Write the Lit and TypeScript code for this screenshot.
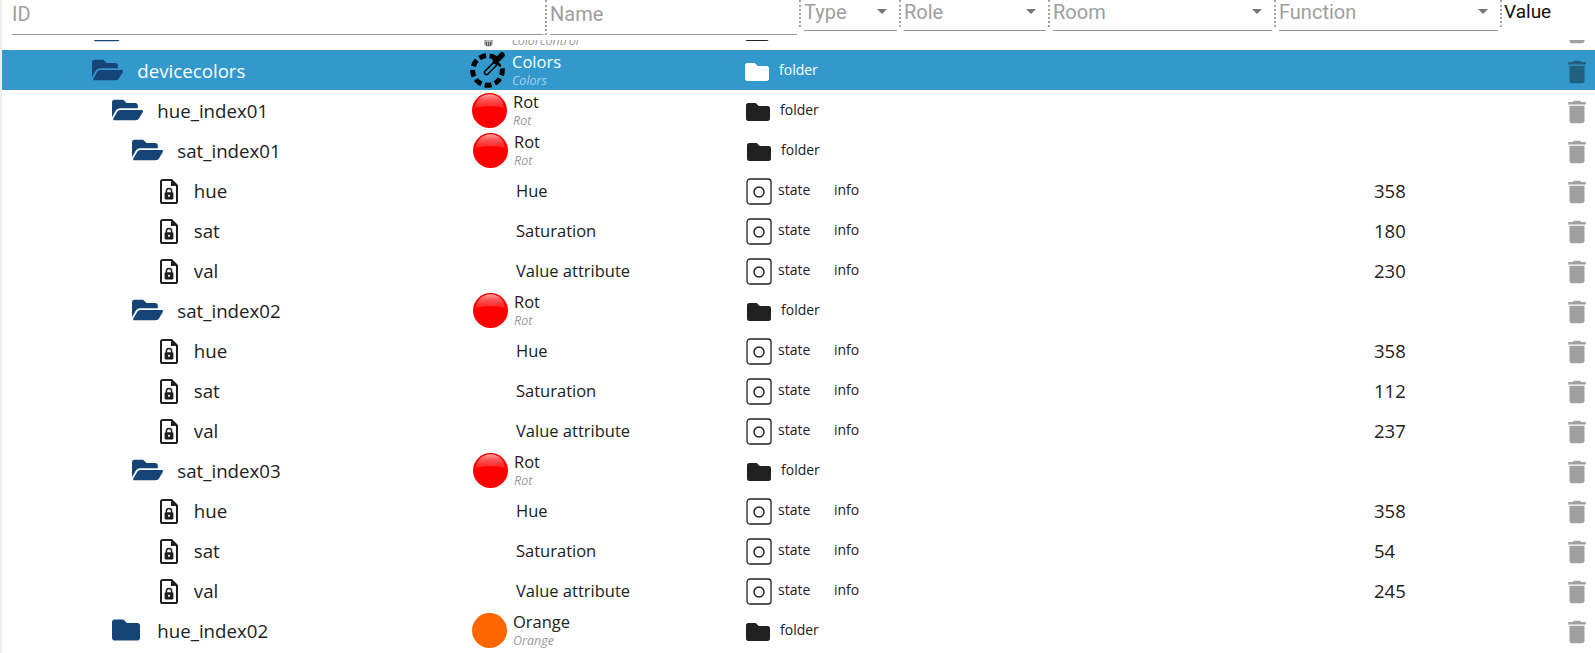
import { LitElement, html, css, nothing } from "lit";
import { customElement } from "lit/decorators.js";

type Row = {
  id: string;
  indent: number;
  icon: "open" | "closed" | "file";
  art?: "colors" | "red" | "orange" | "stub";
  name?: string;
  sub?: string;
  leaf?: boolean;
  value?: string;
  shift: number;
  selected?: boolean;
};

const leaf = (id: string, name: string, value: string): Row => ({
  id,
  indent: 160,
  icon: "file",
  name,
  leaf: true,
  value,
  shift: 1,
});

const sat = (id: string): Row => ({
  id,
  indent: 132,
  icon: "open",
  art: "red",
  name: "Rot",
  sub: "Rot",
  shift: 2,
});

const ROWS: Row[] = [
  { id: "", indent: 93, icon: "open", art: "stub", name: "", sub: "colorcontrol", shift: 0 },
  { id: "devicecolors", indent: 92, icon: "open", art: "colors", name: "Colors", sub: "Colors", shift: 0, selected: true },
  { id: "hue_index01", indent: 112, icon: "open", art: "red", name: "Rot", sub: "Rot", shift: 1 },
  sat("sat_index01"),
  leaf("hue", "Hue", "358"),
  leaf("sat", "Saturation", "180"),
  leaf("val", "Value attribute", "230"),
  sat("sat_index02"),
  leaf("hue", "Hue", "358"),
  leaf("sat", "Saturation", "112"),
  leaf("val", "Value attribute", "237"),
  sat("sat_index03"),
  leaf("hue", "Hue", "358"),
  leaf("sat", "Saturation", "54"),
  leaf("val", "Value attribute", "245"),
  { id: "hue_index02", indent: 112, icon: "closed", art: "orange", name: "Orange", sub: "Orange", shift: 1 },
];

const FIELDS = [
  { label: "Type", width: 93 },
  { label: "Role", width: 142 },
  { label: "Room", width: 219 },
  { label: "Function", width: 219 },
];

const openFolder = html`<svg class="folder-open" viewBox="0 0 576 512">
  <path
    fill="currentColor"
    d="M572.694 292.093L500.27 416.248A63.997 63.997 0 0 1 444.989 448H45.025c-18.523 0-30.064-20.093-20.731-36.093l72.424-124.155A64 64 0 0 1 152 256h399.964c18.523 0 30.064 20.093 20.73 36.093zM152 224h328v-48c0-26.51-21.49-48-48-48H272l-64-64H48C21.49 64 0 85.49 0 112v278.046l69.077-118.418C86.214 242.25 117.989 224 152 224z"
  />
</svg>`;

const folderPath =
  "M464 128H272l-64-64H48C21.49 64 0 85.49 0 112v288c0 26.51 21.49 48 48 48h416c26.51 0 48-21.49 48-48V176c0-26.51-21.49-48-48-48z";

const closedFolder = html`<svg class="folder-closed" viewBox="0 0 512 512">
  <path fill="currentColor" d=${folderPath} />
</svg>`;

const typeFolder = html`<svg class="type-folder" viewBox="0 0 512 512">
  <path fill="currentColor" d=${folderPath} />
</svg>`;

const fileLock = html`<svg class="file-lock" viewBox="0 0 18 25">
  <path
    fill="none"
    stroke="#1c1c1c"
    stroke-width="2"
    stroke-linejoin="round"
    d="M2.6 1H11.5L17 6.5V22.4A1.6 1.6 0 0 1 15.4 24H2.6A1.6 1.6 0 0 1 1 22.4V2.6A1.6 1.6 0 0 1 2.6 1Z"
  />
  <path fill="#1c1c1c" d="M11 1.5V7H16.5Z" />
  <path fill="none" stroke="#1c1c1c" stroke-width="1.5" d="M6.4 13.6V12a2.6 2.6 0 0 1 5.2 0v1.6" />
  <rect x="4.6" y="13.2" width="8.8" height="7.2" rx="0.8" fill="#1c1c1c" />
  <circle cx="9" cy="16.8" r="1.1" fill="#fff" />
</svg>`;

const stateIcon = html`<svg class="state-icon" viewBox="0 0 26 27">
  <rect x="1" y="1" width="24" height="25" rx="3" fill="none" stroke="#222" stroke-width="1.3" />
  <circle cx="13" cy="14" r="5" fill="none" stroke="#222" stroke-width="1.5" />
</svg>`;

const trash = html`<svg class="trash" viewBox="0 0 24 24">
  <path
    fill="currentColor"
    d="M6 19c0 1.1.9 2 2 2h8c1.1 0 2-.9 2-2V7H6v12zM19 4h-3.5l-1-1h-5l-1 1H5v2h14V4z"
  />
</svg>`;

const redBall = html`<svg class="art" viewBox="0 0 35 35">
  <defs>
    <linearGradient id="gloss" x1="0" y1="0" x2="0" y2="1">
      <stop offset="0" stop-color="#ffa6a6" />
      <stop offset="0.35" stop-color="#ff5c5c" />
      <stop offset="1" stop-color="#ff1c1c" />
    </linearGradient>
  </defs>
  <circle cx="17.5" cy="17.5" r="17.5" fill="#f00" />
  <path d="M3 15C4 6 10 1.2 17.5 1.2S31 6 32 15C24 12.8 11 12.8 3 15Z" fill="url(#gloss)" />
</svg>`;

const orangeBall = html`<svg class="art" viewBox="0 0 35 35">
  <circle cx="17.5" cy="17.5" r="17.5" fill="#ff6600" />
</svg>`;

const colorsIcon = html`<svg class="art colors" viewBox="0 0 37 36">
  <circle
    cx="17.5"
    cy="18.5"
    r="14.8"
    fill="none"
    stroke="#000"
    stroke-width="5"
    stroke-dasharray="7 3.5 7 3.5 7 3.5 7 3.5 7 3.5 7 3.5 7 3.5 7 19.5"
    transform="rotate(-8 17.5 18.5)"
  />
  <path d="M16.5 20.5L26 11" stroke="#000" stroke-width="5.5" stroke-linecap="round" />
  <path d="M16.5 20.5L25 12" stroke="#3399cc" stroke-width="2.5" stroke-linecap="round" />
  <path d="M25.5 9.5L32 3" stroke="#000" stroke-width="5.5" stroke-linecap="round" />
  <path d="M23 6.5L30 13.5" stroke="#000" stroke-width="2.5" stroke-linecap="round" />
</svg>`;

const stubIcon = html`<svg class="art stub" viewBox="0 0 35 35">
  <path d="M14 24v7c0 2.5 7 2.5 7 0v-7" fill="#bbb" stroke="#777" />
  <path d="M15.5 29v4M17.5 29v4M19.5 29v4" stroke="#555" />
</svg>`;

@customElement("app-root")
export class AppRoot extends LitElement {
  static styles = css`
    :host {
      display: block;
      height: 653px;
      overflow: hidden;
      background: #fff;
      border-left: 2px solid #ececec;
      color: #212121;
      font-family: "Open Sans", "Noto Sans", sans-serif;
    }
    .head {
      display: flex;
      height: 40px;
      font-family: Roboto, sans-serif;
      color: #9e9e9e;
    }
    .field {
      box-sizing: border-box;
      border-bottom: 1.5px solid #949494;
      display: flex;
      align-items: flex-start;
      justify-content: space-between;
    }
    .text-field {
      height: 35px;
      font-size: 20px;
      line-height: 28px;
    }
    .id-field {
      width: 531px;
      margin-left: 10px;
    }
    .name-field {
      width: 247px;
      margin-left: 3px;
    }
    .select-field {
      height: 31px;
      font-size: 20px;
      line-height: 24px;
      margin-left: 3px;
    }
    .arrow {
      width: 0;
      height: 0;
      border-left: 5px solid transparent;
      border-right: 5px solid transparent;
      border-top: 5px solid #757575;
      margin: 9px 10px 0 0;
    }
    .sep {
      flex: none;
      width: 0;
      height: 27px;
      margin-left: 2px;
      border-left: 2px dotted #a3a3a3;
    }
    .sep.tall {
      height: 35px;
    }
    .value-head {
      margin-left: 2px;
      color: #111;
      font-size: 19px;
      line-height: 24px;
    }
    .rows {
      height: 613px;
      overflow: hidden;
    }
    .row {
      display: grid;
      grid-template-columns: calc(468px + var(--s)) 275px 88px calc(541px - var(--s)) 1fr 30px;
      align-items: center;
      height: 40px;
      padding-right: 3px;
    }
    .row:first-child {
      margin-top: -30px;
    }
    .row:first-child .folder-open {
      margin-top: 1px;
    }
    .row.selected {
      background: #3399cc;
      color: #fff;
    }
    .row.selected .trash {
      color: #22607f;
    }
    .row.selected .type-folder {
      color: #fff;
    }
    .row.selected .sub {
      color: #a5d0e8;
    }
    .id {
      display: flex;
      align-items: center;
      font-size: 18.7px;
      white-space: nowrap;
    }
    .id-text {
      margin-left: 14.3px;
      margin-top: 1px;
    }
    .folder-open {
      width: 31px;
      height: 28px;
      color: #164477;
    }
    .folder-closed {
      width: 28px;
      height: 28px;
      color: #164477;
      margin-right: 3px;
    }
    .file-lock {
      width: 18px;
      height: 25px;
      margin-top: 2px;
      margin-right: 1.5px;
    }
    .name {
      display: flex;
      align-items: center;
    }
    .art-slot {
      flex: none;
      width: 37px;
      height: 36px;
      display: flex;
      align-items: center;
      justify-content: center;
    }
    .art {
      width: 35px;
      height: 35px;
    }
    .art.colors {
      width: 37px;
      height: 36px;
    }
    .labels {
      margin-left: 5px;
      display: flex;
      flex-direction: column;
    }
    .leaf .labels {
      margin-left: 8px;
    }
    .label {
      font-size: 16.5px;
      line-height: 20px;
      min-height: 20px;
      white-space: nowrap;
    }
    .leaf .label {
      padding-top: 2px;
    }
    .sub {
      font-size: 12.5px;
      line-height: 14px;
      margin-top: 2px;
      font-style: italic;
      color: #9a9a9a;
    }
    .type {
      display: flex;
      align-items: center;
      font-size: 14px;
    }
    .type span {
      margin-bottom: 2px;
    }
    .type-folder {
      width: 24px;
      height: 24px;
      color: #212121;
      margin-right: 10px;
      margin-top: 4px;
    }
    .state-icon {
      width: 26px;
      height: 27px;
      margin-right: 6px;
      margin-top: 3px;
    }
    .role {
      font-size: 14px;
      margin-bottom: 2px;
    }
    .value {
      font-size: 18.5px;
      padding-top: 1px;
    }
    .trash {
      width: 30px;
      height: 30px;
      margin-top: 4px;
      color: #a0a0a0;
    }
  `;

  private renderArt(art: Row["art"]) {
    if (art === "colors") return colorsIcon;
    if (art === "red") return redBall;
    if (art === "orange") return orangeBall;
    if (art === "stub") return stubIcon;
    return nothing;
  }

  private renderRow(row: Row) {
    const folderIcon =
      row.icon === "open" ? openFolder : row.icon === "closed" ? closedFolder : fileLock;
    return html`
      <div
        class="row ${row.selected ? "selected" : ""} ${row.leaf ? "leaf" : ""}"
        style="--s:${row.shift}px"
      >
        <div class="id" style="padding-left:${row.indent - 2}px">
          ${folderIcon}
          <span class="id-text">${row.id}</span>
        </div>
        <div class="name">
          <div class="art-slot">${this.renderArt(row.art)}</div>
          <div class="labels">
            <span class="label">${row.name}</span>
            ${row.sub ? html`<span class="sub">${row.sub}</span>` : nothing}
          </div>
        </div>
        <div class="type">
          ${row.leaf ? html`${stateIcon}<span>state</span>` : html`${typeFolder}<span>folder</span>`}
        </div>
        <div class="role">${row.leaf ? "info" : ""}</div>
        <div class="value">${row.value ?? ""}</div>
        ${trash}
      </div>
    `;
  }

  render() {
    return html`
      <div class="head">
        <div class="field text-field id-field">ID</div>
        <div class="sep tall"></div>
        <div class="field text-field name-field">Name</div>
        ${FIELDS.map(
          (f) => html`
            <div class="sep"></div>
            <div class="field select-field" style="width:${f.width}px">
              <span>${f.label}</span><span class="arrow"></span>
            </div>
          `
        )}
        <div class="sep"></div>
        <div class="value-head">Value</div>
      </div>
      <div class="rows">${ROWS.map((r) => this.renderRow(r))}</div>
    `;
  }
}
